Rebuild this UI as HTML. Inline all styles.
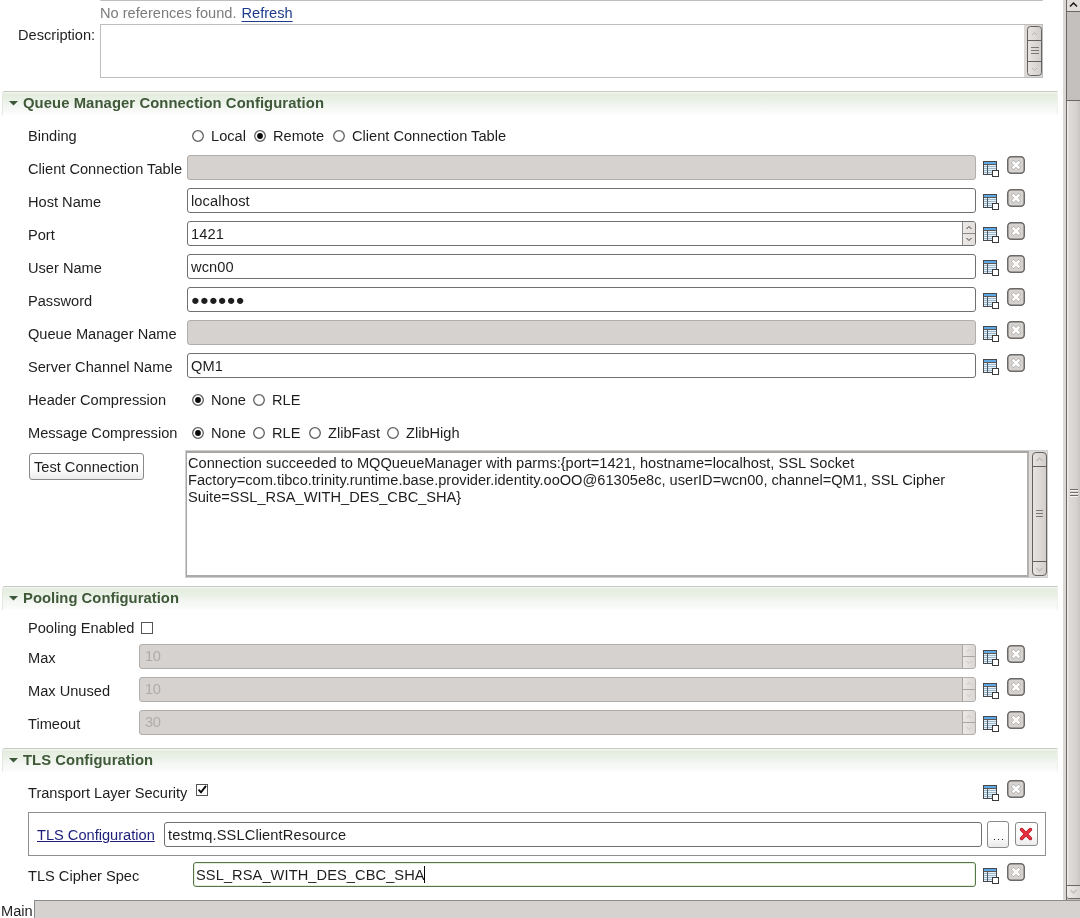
<!DOCTYPE html><html><head><meta charset="utf-8"><style>
*{box-sizing:border-box;margin:0;padding:0}
html,body{width:1080px;height:918px;overflow:hidden;background:#fff}
body{position:relative;font-family:"Liberation Sans",sans-serif;font-size:14.62px;color:#1e1e1e}
#w{position:absolute;left:0;top:0;width:1080px;height:918px;will-change:transform;background:#fff}
.a{position:absolute;white-space:nowrap}
.l{position:absolute;white-space:nowrap;line-height:17px;height:17px}
.hdr{position:absolute;left:2px;width:1056px;border-right:1px solid #eef1ec;height:24px;border-top:1px solid #c4cbc1;border-left:1px solid #e3e8e0;border-top-left-radius:3px;background:linear-gradient(#f4f8f1,#e5ecdf 10%,#e9f0e5 35%,#f3f6f2 60%,#f9faf8 85%,#fdfdfd)}
.hdr svg{position:absolute;left:6px}
.hdr .t{position:absolute;left:20px;font-weight:bold;color:#3e5838;line-height:17px;font-size:14.8px}
.f{position:absolute;height:25px;border:1px solid #6f6f6f;border-radius:3px;background:#fff;padding:4px 0 0 3px;line-height:17px;letter-spacing:0.12px;white-space:nowrap}
.dis{border-color:#b0adab;background:#d6d2cf;color:#b0acaa}
.r{position:absolute;width:12px;height:12px;border:1.6px solid #6a6a6a;border-radius:50%;background:#fff}
.r.on:after{content:"";position:absolute;left:2px;top:2px;width:5.6px;height:5.6px;border-radius:50%;background:#0a0a0a}
.ic{position:absolute}
</style></head><body><div id="w">
<div class="a" style="left:100px;top:0;width:943px;height:1px;background:#bdbdbd;border-radius:0 0 2px 2px"></div>
<div class="l" style="left:100px;top:5px;color:#7c7c7c">No references found. <span style="color:#1d3a8c;text-decoration:underline;text-underline-offset:2.5px;margin-left:1px">Refresh</span></div>
<div class="l" style="left:18px;top:27px;">Description:</div>
<div class="a" style="left:100px;top:24px;width:943px;height:54px;border:1px solid #bdbdbd;background:#fff"></div>
<div class="a" style="left:1024px;top:25px;width:18px;height:52px;background:#dcd9d6"></div>
<div class="a" style="left:1027px;top:26px;width:15px;height:50px;border:1.3px solid #646260;border-radius:3.5px;background:linear-gradient(90deg,#e6e3e0,#d3cfcc)"></div>
<div class="a" style="left:1028px;top:40px;width:13px;height:1.3px;background:#646260"></div>
<div class="a" style="left:1028px;top:61px;width:13px;height:1.3px;background:#646260"></div>
<svg class="ic" width="15" height="50" style="left:1027px;top:26px"><path d="M5 9 L7.5 6.5 L10 9" fill="none" stroke="#b9b6b3" stroke-width="1"/><path d="M5 42 L7.5 44.5 L10 42" fill="none" stroke="#b9b6b3" stroke-width="1"/></svg>
<div class="a" style="left:1031px;top:47px;width:8px;height:1px;background:#7a7876"></div>
<div class="a" style="left:1031px;top:50px;width:8px;height:1px;background:#7a7876"></div>
<div class="a" style="left:1031px;top:53px;width:8px;height:1px;background:#7a7876"></div>
<div class="hdr" style="top:91px"><svg width="10" height="6" style="top:9px"><path d="M0 0 L9 0 L4.5 4.5 Z" fill="#3c5739"/></svg><div class="t" style="top:3px;letter-spacing:0.09px">Queue Manager Connection Configuration</div></div>
<div class="l" style="left:28px;top:128px;">Binding</div>
<svg class="ic" width="12" height="12" style="left:192px;top:130px"><circle cx="6" cy="6" r="5.3" fill="#fff" stroke="#5e5e5e" stroke-width="1.3"/></svg>
<div class="l" style="left:211px;top:128px;">Local</div>
<svg class="ic" width="12" height="12" style="left:254px;top:130px"><circle cx="6" cy="6" r="5.3" fill="#fff" stroke="#5e5e5e" stroke-width="1.3"/><circle cx="6" cy="6" r="2.9" fill="#0a0a0a"/></svg>
<div class="l" style="left:273px;top:128px;">Remote</div>
<svg class="ic" width="12" height="12" style="left:333px;top:130px"><circle cx="6" cy="6" r="5.3" fill="#fff" stroke="#5e5e5e" stroke-width="1.3"/></svg>
<div class="l" style="left:352px;top:128px;">Client Connection Table</div>
<div class="l" style="left:28px;top:161px;">Client Connection Table</div>
<div class="f dis" style="left:187px;top:155px;width:789px;"></div>
<svg class="ic" width="17" height="17" style="left:983px;top:161px" viewBox="0 0 17 17" shape-rendering="crispEdges">
<rect x="0.5" y="0.5" width="13" height="13" fill="#e6f2fb" stroke="#45494d"/>
<rect x="1" y="1" width="12" height="2" fill="#5da8e6"/>
<rect x="1" y="3" width="12" height="1" fill="#62574f"/>
<rect x="1" y="5" width="12" height="1" fill="#9fb9cc"/>
<rect x="1" y="7" width="12" height="1" fill="#9fb9cc"/>
<rect x="1" y="9" width="12" height="1" fill="#9fb9cc"/>
<rect x="1" y="11" width="12" height="1" fill="#9fb9cc"/>
<rect x="4" y="4" width="1" height="9" fill="#4a5560"/>
<rect x="9.5" y="9.5" width="6" height="6" fill="#fff" stroke="#3a3a3a"/>
</svg>
<svg class="ic" width="19" height="19" style="left:1007px;top:156px" viewBox="0 0 19 19">
<rect x="0.75" y="0.75" width="16.5" height="16.5" rx="3.5" fill="#d6d2cf" stroke="#6b6967" stroke-width="1.5"/>
<path d="M5.2 5.2 L12.8 12.8 M12.8 5.2 L5.2 12.8" stroke="#a6a3a0" stroke-width="3.6" stroke-linecap="butt"/>
<path d="M5.6 5.6 L12.4 12.4 M12.4 5.6 L5.6 12.4" stroke="#fff" stroke-width="2.7" stroke-linecap="butt"/>
</svg>
<div class="l" style="left:28px;top:194px;">Host Name</div>
<div class="f" style="left:187px;top:188px;width:789px;">localhost</div>
<svg class="ic" width="17" height="17" style="left:983px;top:194px" viewBox="0 0 17 17" shape-rendering="crispEdges">
<rect x="0.5" y="0.5" width="13" height="13" fill="#e6f2fb" stroke="#45494d"/>
<rect x="1" y="1" width="12" height="2" fill="#5da8e6"/>
<rect x="1" y="3" width="12" height="1" fill="#62574f"/>
<rect x="1" y="5" width="12" height="1" fill="#9fb9cc"/>
<rect x="1" y="7" width="12" height="1" fill="#9fb9cc"/>
<rect x="1" y="9" width="12" height="1" fill="#9fb9cc"/>
<rect x="1" y="11" width="12" height="1" fill="#9fb9cc"/>
<rect x="4" y="4" width="1" height="9" fill="#4a5560"/>
<rect x="9.5" y="9.5" width="6" height="6" fill="#fff" stroke="#3a3a3a"/>
</svg>
<svg class="ic" width="19" height="19" style="left:1007px;top:189px" viewBox="0 0 19 19">
<rect x="0.75" y="0.75" width="16.5" height="16.5" rx="3.5" fill="#d6d2cf" stroke="#6b6967" stroke-width="1.5"/>
<path d="M5.2 5.2 L12.8 12.8 M12.8 5.2 L5.2 12.8" stroke="#a6a3a0" stroke-width="3.6" stroke-linecap="butt"/>
<path d="M5.6 5.6 L12.4 12.4 M12.4 5.6 L5.6 12.4" stroke="#fff" stroke-width="2.7" stroke-linecap="butt"/>
</svg>
<div class="l" style="left:28px;top:227px;">Port</div>
<div class="f" style="left:187px;top:221px;width:789px;">1421<div style="position:absolute;right:0;top:0;width:13px;height:23px;border-left:1px solid #8c8a88;background:linear-gradient(90deg,#ebe8e6,#e2dfdc);border-radius:0 2px 2px 0"><div style="position:absolute;left:0;right:0;top:11px;height:1px;background:#8c8a88"></div><svg width="12" height="23" style="position:absolute;left:0;top:0"><path d="M3.5 7 L6 4.5 L8.5 7" fill="none" stroke="#2a2a2a" stroke-width="0.9"/><path d="M3.5 16 L6 18.5 L8.5 16" fill="none" stroke="#2a2a2a" stroke-width="0.9"/></svg></div></div>
<svg class="ic" width="17" height="17" style="left:983px;top:227px" viewBox="0 0 17 17" shape-rendering="crispEdges">
<rect x="0.5" y="0.5" width="13" height="13" fill="#e6f2fb" stroke="#45494d"/>
<rect x="1" y="1" width="12" height="2" fill="#5da8e6"/>
<rect x="1" y="3" width="12" height="1" fill="#62574f"/>
<rect x="1" y="5" width="12" height="1" fill="#9fb9cc"/>
<rect x="1" y="7" width="12" height="1" fill="#9fb9cc"/>
<rect x="1" y="9" width="12" height="1" fill="#9fb9cc"/>
<rect x="1" y="11" width="12" height="1" fill="#9fb9cc"/>
<rect x="4" y="4" width="1" height="9" fill="#4a5560"/>
<rect x="9.5" y="9.5" width="6" height="6" fill="#fff" stroke="#3a3a3a"/>
</svg>
<svg class="ic" width="19" height="19" style="left:1007px;top:222px" viewBox="0 0 19 19">
<rect x="0.75" y="0.75" width="16.5" height="16.5" rx="3.5" fill="#d6d2cf" stroke="#6b6967" stroke-width="1.5"/>
<path d="M5.2 5.2 L12.8 12.8 M12.8 5.2 L5.2 12.8" stroke="#a6a3a0" stroke-width="3.6" stroke-linecap="butt"/>
<path d="M5.6 5.6 L12.4 12.4 M12.4 5.6 L5.6 12.4" stroke="#fff" stroke-width="2.7" stroke-linecap="butt"/>
</svg>
<div class="l" style="left:28px;top:260px;">User Name</div>
<div class="f" style="left:187px;top:254px;width:789px;">wcn00</div>
<svg class="ic" width="17" height="17" style="left:983px;top:260px" viewBox="0 0 17 17" shape-rendering="crispEdges">
<rect x="0.5" y="0.5" width="13" height="13" fill="#e6f2fb" stroke="#45494d"/>
<rect x="1" y="1" width="12" height="2" fill="#5da8e6"/>
<rect x="1" y="3" width="12" height="1" fill="#62574f"/>
<rect x="1" y="5" width="12" height="1" fill="#9fb9cc"/>
<rect x="1" y="7" width="12" height="1" fill="#9fb9cc"/>
<rect x="1" y="9" width="12" height="1" fill="#9fb9cc"/>
<rect x="1" y="11" width="12" height="1" fill="#9fb9cc"/>
<rect x="4" y="4" width="1" height="9" fill="#4a5560"/>
<rect x="9.5" y="9.5" width="6" height="6" fill="#fff" stroke="#3a3a3a"/>
</svg>
<svg class="ic" width="19" height="19" style="left:1007px;top:255px" viewBox="0 0 19 19">
<rect x="0.75" y="0.75" width="16.5" height="16.5" rx="3.5" fill="#d6d2cf" stroke="#6b6967" stroke-width="1.5"/>
<path d="M5.2 5.2 L12.8 12.8 M12.8 5.2 L5.2 12.8" stroke="#a6a3a0" stroke-width="3.6" stroke-linecap="butt"/>
<path d="M5.6 5.6 L12.4 12.4 M12.4 5.6 L5.6 12.4" stroke="#fff" stroke-width="2.7" stroke-linecap="butt"/>
</svg>
<div class="l" style="left:28px;top:293px;">Password</div>
<div class="f" style="left:187px;top:287px;width:789px;">&#9679;&#9679;&#9679;&#9679;&#9679;&#9679;</div>
<svg class="ic" width="17" height="17" style="left:983px;top:293px" viewBox="0 0 17 17" shape-rendering="crispEdges">
<rect x="0.5" y="0.5" width="13" height="13" fill="#e6f2fb" stroke="#45494d"/>
<rect x="1" y="1" width="12" height="2" fill="#5da8e6"/>
<rect x="1" y="3" width="12" height="1" fill="#62574f"/>
<rect x="1" y="5" width="12" height="1" fill="#9fb9cc"/>
<rect x="1" y="7" width="12" height="1" fill="#9fb9cc"/>
<rect x="1" y="9" width="12" height="1" fill="#9fb9cc"/>
<rect x="1" y="11" width="12" height="1" fill="#9fb9cc"/>
<rect x="4" y="4" width="1" height="9" fill="#4a5560"/>
<rect x="9.5" y="9.5" width="6" height="6" fill="#fff" stroke="#3a3a3a"/>
</svg>
<svg class="ic" width="19" height="19" style="left:1007px;top:288px" viewBox="0 0 19 19">
<rect x="0.75" y="0.75" width="16.5" height="16.5" rx="3.5" fill="#d6d2cf" stroke="#6b6967" stroke-width="1.5"/>
<path d="M5.2 5.2 L12.8 12.8 M12.8 5.2 L5.2 12.8" stroke="#a6a3a0" stroke-width="3.6" stroke-linecap="butt"/>
<path d="M5.6 5.6 L12.4 12.4 M12.4 5.6 L5.6 12.4" stroke="#fff" stroke-width="2.7" stroke-linecap="butt"/>
</svg>
<div class="l" style="left:28px;top:326px;">Queue Manager Name</div>
<div class="f dis" style="left:187px;top:320px;width:789px;"></div>
<svg class="ic" width="17" height="17" style="left:983px;top:326px" viewBox="0 0 17 17" shape-rendering="crispEdges">
<rect x="0.5" y="0.5" width="13" height="13" fill="#e6f2fb" stroke="#45494d"/>
<rect x="1" y="1" width="12" height="2" fill="#5da8e6"/>
<rect x="1" y="3" width="12" height="1" fill="#62574f"/>
<rect x="1" y="5" width="12" height="1" fill="#9fb9cc"/>
<rect x="1" y="7" width="12" height="1" fill="#9fb9cc"/>
<rect x="1" y="9" width="12" height="1" fill="#9fb9cc"/>
<rect x="1" y="11" width="12" height="1" fill="#9fb9cc"/>
<rect x="4" y="4" width="1" height="9" fill="#4a5560"/>
<rect x="9.5" y="9.5" width="6" height="6" fill="#fff" stroke="#3a3a3a"/>
</svg>
<svg class="ic" width="19" height="19" style="left:1007px;top:321px" viewBox="0 0 19 19">
<rect x="0.75" y="0.75" width="16.5" height="16.5" rx="3.5" fill="#d6d2cf" stroke="#6b6967" stroke-width="1.5"/>
<path d="M5.2 5.2 L12.8 12.8 M12.8 5.2 L5.2 12.8" stroke="#a6a3a0" stroke-width="3.6" stroke-linecap="butt"/>
<path d="M5.6 5.6 L12.4 12.4 M12.4 5.6 L5.6 12.4" stroke="#fff" stroke-width="2.7" stroke-linecap="butt"/>
</svg>
<div class="l" style="left:28px;top:359px;">Server Channel Name</div>
<div class="f" style="left:187px;top:353px;width:789px;">QM1</div>
<svg class="ic" width="17" height="17" style="left:983px;top:359px" viewBox="0 0 17 17" shape-rendering="crispEdges">
<rect x="0.5" y="0.5" width="13" height="13" fill="#e6f2fb" stroke="#45494d"/>
<rect x="1" y="1" width="12" height="2" fill="#5da8e6"/>
<rect x="1" y="3" width="12" height="1" fill="#62574f"/>
<rect x="1" y="5" width="12" height="1" fill="#9fb9cc"/>
<rect x="1" y="7" width="12" height="1" fill="#9fb9cc"/>
<rect x="1" y="9" width="12" height="1" fill="#9fb9cc"/>
<rect x="1" y="11" width="12" height="1" fill="#9fb9cc"/>
<rect x="4" y="4" width="1" height="9" fill="#4a5560"/>
<rect x="9.5" y="9.5" width="6" height="6" fill="#fff" stroke="#3a3a3a"/>
</svg>
<svg class="ic" width="19" height="19" style="left:1007px;top:354px" viewBox="0 0 19 19">
<rect x="0.75" y="0.75" width="16.5" height="16.5" rx="3.5" fill="#d6d2cf" stroke="#6b6967" stroke-width="1.5"/>
<path d="M5.2 5.2 L12.8 12.8 M12.8 5.2 L5.2 12.8" stroke="#a6a3a0" stroke-width="3.6" stroke-linecap="butt"/>
<path d="M5.6 5.6 L12.4 12.4 M12.4 5.6 L5.6 12.4" stroke="#fff" stroke-width="2.7" stroke-linecap="butt"/>
</svg>
<div class="l" style="left:28px;top:392px;">Header Compression</div>
<svg class="ic" width="12" height="12" style="left:192px;top:394px"><circle cx="6" cy="6" r="5.3" fill="#fff" stroke="#5e5e5e" stroke-width="1.3"/><circle cx="6" cy="6" r="2.9" fill="#0a0a0a"/></svg>
<div class="l" style="left:211px;top:392px;">None</div>
<svg class="ic" width="12" height="12" style="left:253px;top:394px"><circle cx="6" cy="6" r="5.3" fill="#fff" stroke="#5e5e5e" stroke-width="1.3"/></svg>
<div class="l" style="left:272px;top:392px;">RLE</div>
<div class="l" style="left:28px;top:425px;">Message Compression</div>
<svg class="ic" width="12" height="12" style="left:192px;top:427px"><circle cx="6" cy="6" r="5.3" fill="#fff" stroke="#5e5e5e" stroke-width="1.3"/><circle cx="6" cy="6" r="2.9" fill="#0a0a0a"/></svg>
<div class="l" style="left:211px;top:425px;">None</div>
<svg class="ic" width="12" height="12" style="left:253px;top:427px"><circle cx="6" cy="6" r="5.3" fill="#fff" stroke="#5e5e5e" stroke-width="1.3"/></svg>
<div class="l" style="left:272px;top:425px;">RLE</div>
<svg class="ic" width="12" height="12" style="left:309px;top:427px"><circle cx="6" cy="6" r="5.3" fill="#fff" stroke="#5e5e5e" stroke-width="1.3"/></svg>
<div class="l" style="left:328px;top:425px;">ZlibFast</div>
<svg class="ic" width="12" height="12" style="left:387px;top:427px"><circle cx="6" cy="6" r="5.3" fill="#fff" stroke="#5e5e5e" stroke-width="1.3"/></svg>
<div class="l" style="left:406px;top:425px;">ZlibHigh</div>
<div class="a" style="left:29px;top:453px;width:115px;height:27px;border:1px solid #8a8a8a;border-radius:3px;background:linear-gradient(#fff,#fdfdfd 60%,#ececec)"></div>
<div class="l" style="left:34px;top:459px;">Test Connection</div>
<div class="a" style="left:185px;top:450px;width:863px;height:128px;border:1px solid #cfcfcf;background:#fff"></div>
<div class="a" style="left:186px;top:451px;width:843px;height:126px;border-left:1.5px solid #a9a5a3;border-top:2px solid #a9a5a3;border-bottom:2px solid #aeaaa8;border-right:2px solid #b3afad"></div>
<div class="a" style="left:1029px;top:451px;width:18px;height:126px;background:#dedbd8"></div>
<div class="a" style="left:1032px;top:452px;width:15px;height:124px;border:1.3px solid #646260;border-radius:4px;background:linear-gradient(90deg,#e6e3e0,#d3cfcc)"></div>
<div class="a" style="left:1033px;top:466px;width:13px;height:1.2px;background:#646260"></div>
<div class="a" style="left:1033px;top:561px;width:13px;height:1.2px;background:#646260"></div>
<svg class="ic" width="15" height="124" style="left:1032px;top:452px"><path d="M4.5 9 L7.5 6 L10.5 9" fill="none" stroke="#bdbab7" stroke-width="1.1"/><path d="M4.5 116 L7.5 119 L10.5 116" fill="none" stroke="#bdbab7" stroke-width="1.1"/></svg>
<div class="a" style="left:1036px;top:510px;width:7px;height:1px;background:#7a7876"></div>
<div class="a" style="left:1036px;top:513px;width:7px;height:1px;background:#7a7876"></div>
<div class="a" style="left:1036px;top:516px;width:7px;height:1px;background:#7a7876"></div>
<div class="l" style="left:188px;top:455px;height:auto;white-space:pre">Connection succeeded to MQQueueManager with parms:{port=1421, hostname=localhost, SSL Socket
Factory=com.tibco.trinity.runtime.base.provider.identity.ooOO@61305e8c, userID=wcn00, channel=QM1, SSL Cipher
Suite=SSL_RSA_WITH_DES_CBC_SHA}</div>
<div class="hdr" style="top:586px"><svg width="10" height="6" style="top:9px"><path d="M0 0 L9 0 L4.5 4.5 Z" fill="#3c5739"/></svg><div class="t" style="top:3px;letter-spacing:0.03px">Pooling Configuration</div></div>
<div class="l" style="left:28px;top:620px;">Pooling Enabled</div>
<div class="a" style="left:141px;top:622px;width:12px;height:12px;border:1px solid #555;background:#fff"></div>
<div class="l" style="left:28px;top:650px;">Max</div>
<div class="f dis" style="left:139px;top:644px;width:837px;padding-left:5px;padding-top:3px;letter-spacing:-0.3px">10<div style="position:absolute;right:0;top:0;width:13px;height:23px;border-left:1px solid #a9a5a2;background:linear-gradient(90deg,#ebe8e6,#dad6d3);border-radius:0 2px 2px 0"><div style="position:absolute;left:0;right:0;top:11px;height:1px;background:#a9a5a2"></div><svg width="12" height="23" style="position:absolute;left:0;top:0"><path d="M3.5 7 L6 4.5 L8.5 7" fill="none" stroke="#c9c5c2" stroke-width="0.9"/><path d="M3.5 16 L6 18.5 L8.5 16" fill="none" stroke="#c9c5c2" stroke-width="0.9"/></svg></div></div>
<svg class="ic" width="17" height="17" style="left:983px;top:650px" viewBox="0 0 17 17" shape-rendering="crispEdges">
<rect x="0.5" y="0.5" width="13" height="13" fill="#e6f2fb" stroke="#45494d"/>
<rect x="1" y="1" width="12" height="2" fill="#5da8e6"/>
<rect x="1" y="3" width="12" height="1" fill="#62574f"/>
<rect x="1" y="5" width="12" height="1" fill="#9fb9cc"/>
<rect x="1" y="7" width="12" height="1" fill="#9fb9cc"/>
<rect x="1" y="9" width="12" height="1" fill="#9fb9cc"/>
<rect x="1" y="11" width="12" height="1" fill="#9fb9cc"/>
<rect x="4" y="4" width="1" height="9" fill="#4a5560"/>
<rect x="9.5" y="9.5" width="6" height="6" fill="#fff" stroke="#3a3a3a"/>
</svg>
<svg class="ic" width="19" height="19" style="left:1007px;top:645px" viewBox="0 0 19 19">
<rect x="0.75" y="0.75" width="16.5" height="16.5" rx="3.5" fill="#d6d2cf" stroke="#6b6967" stroke-width="1.5"/>
<path d="M5.2 5.2 L12.8 12.8 M12.8 5.2 L5.2 12.8" stroke="#a6a3a0" stroke-width="3.6" stroke-linecap="butt"/>
<path d="M5.6 5.6 L12.4 12.4 M12.4 5.6 L5.6 12.4" stroke="#fff" stroke-width="2.7" stroke-linecap="butt"/>
</svg>
<div class="l" style="left:28px;top:683px;">Max Unused</div>
<div class="f dis" style="left:139px;top:677px;width:837px;padding-left:5px;padding-top:3px;letter-spacing:-0.3px">10<div style="position:absolute;right:0;top:0;width:13px;height:23px;border-left:1px solid #a9a5a2;background:linear-gradient(90deg,#ebe8e6,#dad6d3);border-radius:0 2px 2px 0"><div style="position:absolute;left:0;right:0;top:11px;height:1px;background:#a9a5a2"></div><svg width="12" height="23" style="position:absolute;left:0;top:0"><path d="M3.5 7 L6 4.5 L8.5 7" fill="none" stroke="#c9c5c2" stroke-width="0.9"/><path d="M3.5 16 L6 18.5 L8.5 16" fill="none" stroke="#c9c5c2" stroke-width="0.9"/></svg></div></div>
<svg class="ic" width="17" height="17" style="left:983px;top:683px" viewBox="0 0 17 17" shape-rendering="crispEdges">
<rect x="0.5" y="0.5" width="13" height="13" fill="#e6f2fb" stroke="#45494d"/>
<rect x="1" y="1" width="12" height="2" fill="#5da8e6"/>
<rect x="1" y="3" width="12" height="1" fill="#62574f"/>
<rect x="1" y="5" width="12" height="1" fill="#9fb9cc"/>
<rect x="1" y="7" width="12" height="1" fill="#9fb9cc"/>
<rect x="1" y="9" width="12" height="1" fill="#9fb9cc"/>
<rect x="1" y="11" width="12" height="1" fill="#9fb9cc"/>
<rect x="4" y="4" width="1" height="9" fill="#4a5560"/>
<rect x="9.5" y="9.5" width="6" height="6" fill="#fff" stroke="#3a3a3a"/>
</svg>
<svg class="ic" width="19" height="19" style="left:1007px;top:678px" viewBox="0 0 19 19">
<rect x="0.75" y="0.75" width="16.5" height="16.5" rx="3.5" fill="#d6d2cf" stroke="#6b6967" stroke-width="1.5"/>
<path d="M5.2 5.2 L12.8 12.8 M12.8 5.2 L5.2 12.8" stroke="#a6a3a0" stroke-width="3.6" stroke-linecap="butt"/>
<path d="M5.6 5.6 L12.4 12.4 M12.4 5.6 L5.6 12.4" stroke="#fff" stroke-width="2.7" stroke-linecap="butt"/>
</svg>
<div class="l" style="left:28px;top:716px;">Timeout</div>
<div class="f dis" style="left:139px;top:710px;width:837px;padding-left:5px;padding-top:3px;letter-spacing:-0.3px">30<div style="position:absolute;right:0;top:0;width:13px;height:23px;border-left:1px solid #a9a5a2;background:linear-gradient(90deg,#ebe8e6,#dad6d3);border-radius:0 2px 2px 0"><div style="position:absolute;left:0;right:0;top:11px;height:1px;background:#a9a5a2"></div><svg width="12" height="23" style="position:absolute;left:0;top:0"><path d="M3.5 7 L6 4.5 L8.5 7" fill="none" stroke="#c9c5c2" stroke-width="0.9"/><path d="M3.5 16 L6 18.5 L8.5 16" fill="none" stroke="#c9c5c2" stroke-width="0.9"/></svg></div></div>
<svg class="ic" width="17" height="17" style="left:983px;top:716px" viewBox="0 0 17 17" shape-rendering="crispEdges">
<rect x="0.5" y="0.5" width="13" height="13" fill="#e6f2fb" stroke="#45494d"/>
<rect x="1" y="1" width="12" height="2" fill="#5da8e6"/>
<rect x="1" y="3" width="12" height="1" fill="#62574f"/>
<rect x="1" y="5" width="12" height="1" fill="#9fb9cc"/>
<rect x="1" y="7" width="12" height="1" fill="#9fb9cc"/>
<rect x="1" y="9" width="12" height="1" fill="#9fb9cc"/>
<rect x="1" y="11" width="12" height="1" fill="#9fb9cc"/>
<rect x="4" y="4" width="1" height="9" fill="#4a5560"/>
<rect x="9.5" y="9.5" width="6" height="6" fill="#fff" stroke="#3a3a3a"/>
</svg>
<svg class="ic" width="19" height="19" style="left:1007px;top:711px" viewBox="0 0 19 19">
<rect x="0.75" y="0.75" width="16.5" height="16.5" rx="3.5" fill="#d6d2cf" stroke="#6b6967" stroke-width="1.5"/>
<path d="M5.2 5.2 L12.8 12.8 M12.8 5.2 L5.2 12.8" stroke="#a6a3a0" stroke-width="3.6" stroke-linecap="butt"/>
<path d="M5.6 5.6 L12.4 12.4 M12.4 5.6 L5.6 12.4" stroke="#fff" stroke-width="2.7" stroke-linecap="butt"/>
</svg>
<div class="hdr" style="top:748px"><svg width="10" height="6" style="top:9px"><path d="M0 0 L9 0 L4.5 4.5 Z" fill="#3c5739"/></svg><div class="t" style="top:3px;letter-spacing:0.07px">TLS Configuration</div></div>
<div class="l" style="left:28px;top:785px;">Transport Layer Security</div>
<div class="a" style="left:196px;top:784px;width:12px;height:12px;border:1px solid #555;background:#fff"></div>
<svg class="ic" width="12" height="12" style="left:196px;top:784px"><path d="M2.6 5.6 L5 8.3 L10 1.8" fill="none" stroke="#0a0a0a" stroke-width="1.9"/></svg>
<svg class="ic" width="17" height="17" style="left:983px;top:785px" viewBox="0 0 17 17" shape-rendering="crispEdges">
<rect x="0.5" y="0.5" width="13" height="13" fill="#e6f2fb" stroke="#45494d"/>
<rect x="1" y="1" width="12" height="2" fill="#5da8e6"/>
<rect x="1" y="3" width="12" height="1" fill="#62574f"/>
<rect x="1" y="5" width="12" height="1" fill="#9fb9cc"/>
<rect x="1" y="7" width="12" height="1" fill="#9fb9cc"/>
<rect x="1" y="9" width="12" height="1" fill="#9fb9cc"/>
<rect x="1" y="11" width="12" height="1" fill="#9fb9cc"/>
<rect x="4" y="4" width="1" height="9" fill="#4a5560"/>
<rect x="9.5" y="9.5" width="6" height="6" fill="#fff" stroke="#3a3a3a"/>
</svg>
<svg class="ic" width="19" height="19" style="left:1007px;top:780px" viewBox="0 0 19 19">
<rect x="0.75" y="0.75" width="16.5" height="16.5" rx="3.5" fill="#d6d2cf" stroke="#6b6967" stroke-width="1.5"/>
<path d="M5.2 5.2 L12.8 12.8 M12.8 5.2 L5.2 12.8" stroke="#a6a3a0" stroke-width="3.6" stroke-linecap="butt"/>
<path d="M5.6 5.6 L12.4 12.4 M12.4 5.6 L5.6 12.4" stroke="#fff" stroke-width="2.7" stroke-linecap="butt"/>
</svg>
<div class="a" style="left:28px;top:812px;width:1018px;height:44px;border:1px solid #8f8f8f"></div>
<div class="l" style="left:37px;top:827px;color:#1c1e7a;text-decoration:underline">TLS Configuration</div>
<div class="f" style="left:164px;top:822px;width:818px;">testmq.SSLClientResource</div>
<div class="a" style="left:987px;top:821px;width:22px;height:27px;border:1px solid #8a8a8a;border-radius:3px;background:linear-gradient(#fff,#fcfcfc 60%,#e9e9e9)"></div>
<div class="a" style="left:994px;top:839px;width:1.2px;height:1.2px;background:#222"></div>
<div class="a" style="left:998px;top:839px;width:1.2px;height:1.2px;background:#222"></div>
<div class="a" style="left:1002px;top:839px;width:1.2px;height:1.2px;background:#222"></div>
<div class="a" style="left:1015px;top:822px;width:23px;height:24px;border:1px solid #8a8a8a;border-radius:3px;background:linear-gradient(#fff,#fbfbfb 60%,#ebebeb)"></div>
<svg class="ic" width="14" height="14" style="left:1019px;top:826.5px"><path d="M2.6 2.6 L11.4 11.4 M11.4 2.6 L2.6 11.4" stroke="#b01c2c" stroke-width="3.6" stroke-linecap="round"/><path d="M2.8 2.8 L11.2 11.2 M11.2 2.8 L2.8 11.2" stroke="#e8303f" stroke-width="2.4" stroke-linecap="round"/></svg>
<div class="l" style="left:28px;top:868px;">TLS Cipher Spec</div>
<div class="f" style="left:193px;top:862px;width:783px;border-color:#56764a;box-shadow:inset 0 0 0 1px #e3efdc;padding-left:2px;letter-spacing:0.09px">SSL_RSA_WITH_DES_CBC_SHA<span style="position:absolute;left:230px;top:3px;width:1px;height:17px;background:#000"></span></div>
<svg class="ic" width="17" height="17" style="left:983px;top:868px" viewBox="0 0 17 17" shape-rendering="crispEdges">
<rect x="0.5" y="0.5" width="13" height="13" fill="#e6f2fb" stroke="#45494d"/>
<rect x="1" y="1" width="12" height="2" fill="#5da8e6"/>
<rect x="1" y="3" width="12" height="1" fill="#62574f"/>
<rect x="1" y="5" width="12" height="1" fill="#9fb9cc"/>
<rect x="1" y="7" width="12" height="1" fill="#9fb9cc"/>
<rect x="1" y="9" width="12" height="1" fill="#9fb9cc"/>
<rect x="1" y="11" width="12" height="1" fill="#9fb9cc"/>
<rect x="4" y="4" width="1" height="9" fill="#4a5560"/>
<rect x="9.5" y="9.5" width="6" height="6" fill="#fff" stroke="#3a3a3a"/>
</svg>
<svg class="ic" width="19" height="19" style="left:1007px;top:863px" viewBox="0 0 19 19">
<rect x="0.75" y="0.75" width="16.5" height="16.5" rx="3.5" fill="#d6d2cf" stroke="#6b6967" stroke-width="1.5"/>
<path d="M5.2 5.2 L12.8 12.8 M12.8 5.2 L5.2 12.8" stroke="#a6a3a0" stroke-width="3.6" stroke-linecap="butt"/>
<path d="M5.6 5.6 L12.4 12.4 M12.4 5.6 L5.6 12.4" stroke="#fff" stroke-width="2.7" stroke-linecap="butt"/>
</svg>
<div class="a" style="left:1063px;top:0;width:3px;height:900px;background:#dcd8d5"></div>
<div class="a" style="left:1066px;top:0;width:14px;height:900px;background:#c4c0bd"></div>
<div class="a" style="left:1066px;top:0;width:1px;height:900px;background:#6a6866"></div>
<div class="a" style="left:1067px;top:0;width:13px;height:11px;background:#e1dedb"></div>
<div class="a" style="left:1066px;top:11px;width:14px;height:1px;background:#6a6866"></div>
<svg class="ic" width="13" height="11" style="left:1067px;top:0"><path d="M3 6.5 L6.5 3 L10 6.5" fill="none" stroke="#1a1a1a" stroke-width="1.5"/></svg>
<div class="a" style="left:1066px;top:100px;width:14px;height:1px;background:#6a6866"></div>
<div class="a" style="left:1067px;top:101px;width:13px;height:784px;background:linear-gradient(90deg,#f4f2f0,#dedad7 15%,#d6d2cf 70%,#c9c5c2)"></div>
<div class="a" style="left:1070px;top:489px;width:8px;height:1px;background:#6e6c6a"></div>
<div class="a" style="left:1070px;top:490px;width:8px;height:1px;background:#f6f5f4"></div>
<div class="a" style="left:1070px;top:492px;width:8px;height:1px;background:#6e6c6a"></div>
<div class="a" style="left:1070px;top:493px;width:8px;height:1px;background:#f6f5f4"></div>
<div class="a" style="left:1070px;top:495px;width:8px;height:1px;background:#6e6c6a"></div>
<div class="a" style="left:1070px;top:496px;width:8px;height:1px;background:#f6f5f4"></div>
<div class="a" style="left:1066px;top:885px;width:14px;height:1px;background:#6a6866"></div>
<div class="a" style="left:1067px;top:886px;width:13px;height:13px;background:linear-gradient(90deg,#eeebe9,#d9d5d2);border-bottom:1px solid #6a6866;border-bottom-left-radius:3px"></div>
<svg class="ic" width="13" height="13" style="left:1067px;top:886px"><path d="M3.5 4 L6.5 7 L9.5 4" fill="none" stroke="#c2bebb" stroke-width="1.4"/></svg>
<div class="a" style="left:34px;top:900px;width:1046px;height:18px;border-top:1px solid #8c8c8c;border-left:1px solid #8c8c8c;background:#d6d2cf"></div>
<div class="l" style="left:1px;top:903px;">Main</div>
</div></body></html>
